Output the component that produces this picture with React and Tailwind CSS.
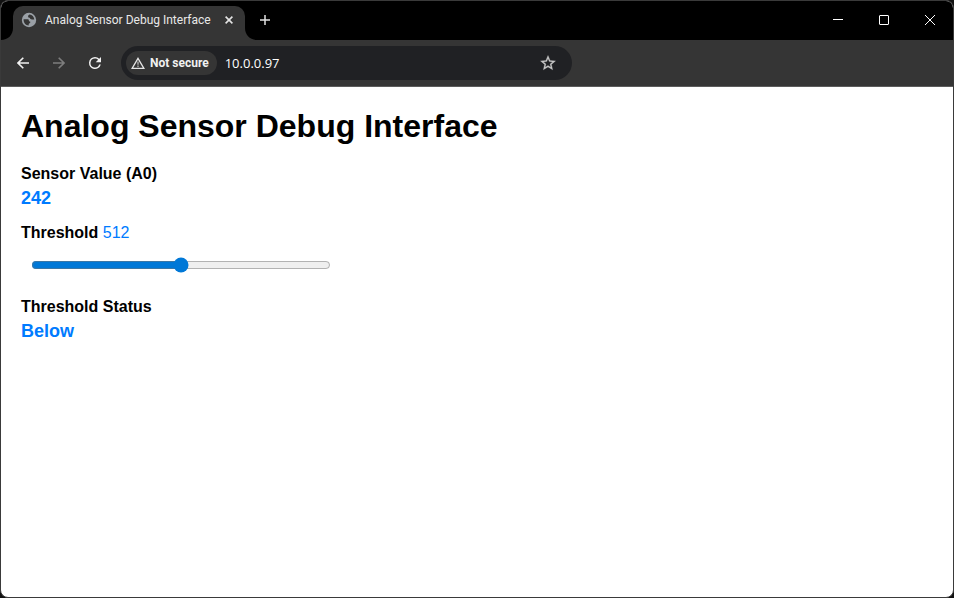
import { useState } from "react";

const chromeFont = "font-[Roboto,'Open_Sans',sans-serif]";

function GlobeIcon() {
  return (
    <svg viewBox="0 0 16 16" className="size-4 shrink-0" aria-hidden="true">
      <circle cx="8" cy="8" r="7.2" fill="#9aa0a6" />
      <path
        d="M2.6 7.2h3.6c1.2 0 1.7.5 1.7 1.4 0 .8.5 1 1.300 1v1.400c-.9.1-1.500.6-1.500 1.600v.8C4.800 13.300 2.400 10.800 2.600 7.200zM8.700 2.600c-1 .4-1.600 1-1.600 1.900 0 .9.7 1.200 1.700 1.200.3 1.300.9 1.700 2.200 1.700h2.300C12.900 4.900 11.200 3 8.700 2.600z"
        fill="#353535"
      />
    </svg>
  );
}

function CloseTabIcon() {
  return (
    <svg viewBox="0 0 8 8" className="size-2" fill="none" stroke="#e3e3e3" strokeWidth="1.6" aria-hidden="true">
      <path d="M.6.6l6.800 6.800M7.400.6L.6 7.400" />
    </svg>
  );
}

function PlusIcon() {
  return (
    <svg viewBox="0 0 10 10" className="size-[10px]" fill="none" stroke="#e3e3e3" strokeWidth="1.5" aria-hidden="true">
      <path d="M5 0v10M0 5h10" />
    </svg>
  );
}

function ArrowIcon({ className }) {
  return (
    <svg viewBox="0 0 12 12" className={className} fill="none" stroke="currentColor" strokeWidth="1.6" aria-hidden="true">
      <path d="M12 6H1.200M6.300.7L1 6l5.300 5.300" />
    </svg>
  );
}

function ReloadIcon() {
  return (
    <svg viewBox="0 0 24 24" className="size-[18px]" fill="#f1f1f1" aria-hidden="true">
      <path d="M17.650 6.350A7.950 7.950 0 0 0 12 4a8 8 0 1 0 7.730 10h-2.080A6 6 0 1 1 12 6c1.660 0 3.140.69 4.220 1.780L13 11h7V4l-2.350 2.350z" />
    </svg>
  );
}

function WarningIcon() {
  return (
    <svg viewBox="0 0 14 12" className="h-3 w-[14px] shrink-0" fill="none" aria-hidden="true">
      <path d="M7 1.300L12.900 11.300H1.100z" stroke="#e3e3e3" strokeWidth="1.3" />
      <path d="M7 4.600v3.200M7 8.600v1.300" stroke="#b5b5b5" strokeWidth="1.3" />
    </svg>
  );
}

function StarIcon() {
  return (
    <svg viewBox="0 0 24 24" className="size-[18px]" fill="#c7c7c7" stroke="#c7c7c7" strokeWidth=".4" aria-hidden="true">
      <path d="M22 9.240l-7.190-.62L12 2 9.190 8.630 2 9.240l5.460 4.730L5.820 21 12 17.270 18.180 21l-1.630-7.030L22 9.240zM12 15.400l-3.760 2.270 1-4.280-3.320-2.880 4.380-.38L12 6.100l1.710 4.040 4.380.38-3.320 2.880 1 4.280L12 15.400z" />
    </svg>
  );
}

function Flare({ className }) {
  return (
    <svg viewBox="0 0 12 12" className={className} fill="#353535" aria-hidden="true">
      <path d="M12 0v12H0C7 12 12 7 12 0z" />
    </svg>
  );
}

function TitleBar() {
  return (
    <header className="flex h-[39px] items-end bg-black">
      <Flare className="size-3 shrink-0" />
      <div className="flex h-[34px] w-[232px] items-center rounded-t-[10px] bg-[#353535] pr-3 pb-[6px] pl-2">
        <GlobeIcon />
        <span className="ml-2 flex-1 text-[12px] leading-4 whitespace-nowrap text-[#e8e8e8]">
          Analog Sensor Debug Interface
        </span>
        <button type="button" aria-label="Close tab">
          <CloseTabIcon />
        </button>
      </div>
      <Flare className="size-3 shrink-0 -scale-x-100" />
      <div className="flex h-[34px] flex-1 items-center pb-[6px]">
        <button type="button" aria-label="New tab" className="ml-[3px]">
          <PlusIcon />
        </button>
      </div>
      <div className="flex h-full pb-px">
        <button type="button" aria-label="Minimize" className="flex w-[46px] items-center justify-center">
          <svg viewBox="0 0 10 10" className="size-[10px]" stroke="#fff" aria-hidden="true">
            <path d="M0 4.500h10" />
          </svg>
        </button>
        <button type="button" aria-label="Maximize" className="flex w-[46px] items-center justify-center">
          <svg viewBox="0 0 10 10" className="size-[10px]" stroke="#fff" fill="none" aria-hidden="true">
            <rect x=".5" y=".5" width="9" height="9" rx=".5" />
          </svg>
        </button>
        <button type="button" aria-label="Close" className="flex w-[46px] items-center justify-center">
          <svg viewBox="0 0 10 10" className="size-[10px]" stroke="#fff" aria-hidden="true">
            <path d="M0 0l10 10M10 0L0 10" />
          </svg>
        </button>
      </div>
    </header>
  );
}

function Toolbar() {
  return (
    <nav className="flex h-[47px] items-center border-b border-[#5c5c5c] bg-[#353535] pl-1">
      <button type="button" aria-label="Back" className="flex w-9 justify-center text-[#f1f1f1]">
        <ArrowIcon className="size-3" />
      </button>
      <button type="button" aria-label="Forward" className="flex w-9 justify-center text-[#7d7d7d]">
        <ArrowIcon className="size-3 -scale-x-100" />
      </button>
      <button type="button" aria-label="Reload" className="flex w-9 justify-center">
        <ReloadIcon />
      </button>
      <div className="ml-2 flex h-[34px] w-[451px] items-center rounded-full bg-[#202124] pr-[15px] pl-[5px]">
        <button
          type="button"
          className="flex h-6 shrink-0 items-center gap-[5px] rounded-full bg-[#353535] pr-2 pl-[5px] text-[12px] leading-4 font-bold whitespace-nowrap text-[#f1f1f1]"
        >
          <WarningIcon />
          Not secure
        </button>
        <input
          type="text"
          aria-label="Address"
          defaultValue="10.0.0.97"
          className="ml-2 min-w-0 flex-1 bg-transparent font-['Open_Sans',sans-serif] text-[13px] leading-5 text-white outline-none"
        />
        <button type="button" aria-label="Bookmark this page">
          <StarIcon />
        </button>
      </div>
    </nav>
  );
}

export default function App() {
  const [threshold, setThreshold] = useState(512);
  return (
    <div className="min-h-screen bg-[#111111]">
      <div className={`flex min-h-screen flex-col overflow-hidden rounded-lg border border-[#3a3a3a] bg-white ${chromeFont}`}>
        <TitleBar />
        <Toolbar />
        <main className="flex-1 p-5 font-['Liberation_Sans',Arial,sans-serif] text-[16px] leading-5 text-black">
          <h1 className="text-[32px] leading-[38px] font-bold">Analog Sensor Debug Interface</h1>
          <section className="mt-[19px]">
            <h2 className="font-bold">Sensor Value (A0)</h2>
            <p className="mt-[2px] text-[18px] leading-6 font-bold text-[#007bff]">242</p>
          </section>
          <section className="mt-[13px]">
            <label htmlFor="threshold" className="font-bold">
              Threshold
            </label>{" "}
            <output htmlFor="threshold" className="text-[#007bff]">
              {threshold}
            </output>
            <input
              id="threshold"
              type="range"
              min="0"
              max="1023"
              value={threshold}
              onChange={(e) => setThreshold(Number(e.target.value))}
              className="mx-[10px] mt-[14px] block h-4 w-[300px] accent-[#0078d7]"
            />
          </section>
          <section className="mt-6">
            <h2 className="font-bold">Threshold Status</h2>
            <p className="mt-[2px] text-[18px] leading-6 font-bold text-[#007bff]">Below</p>
          </section>
        </main>
      </div>
    </div>
  );
}
